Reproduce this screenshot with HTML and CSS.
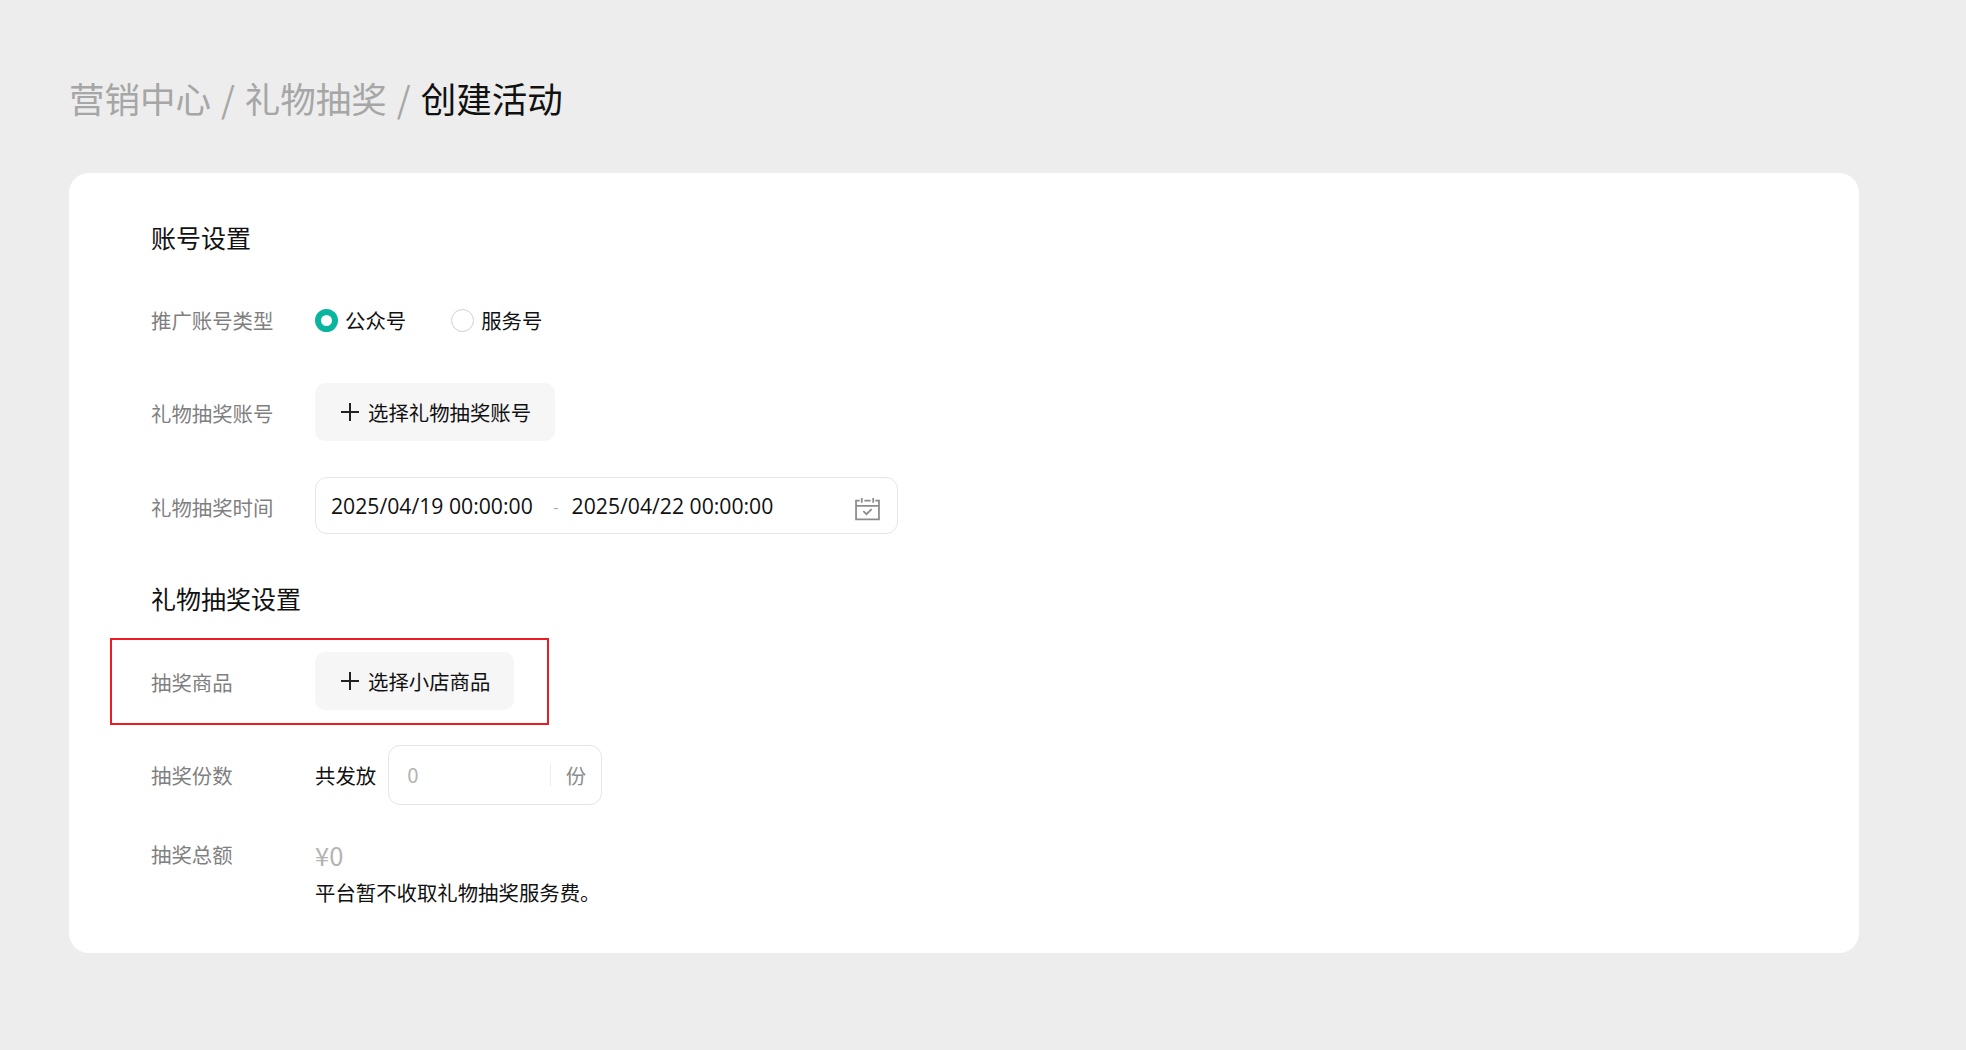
FILE: index.html
```html
<!DOCTYPE html>
<html lang="zh-CN">
<head>
    <meta charset="UTF-8">
    <title>创建活动</title>
    <link rel="stylesheet" href="styles.css">
</head>
<body>
    <h1 class="crumbs">
        <span class="crumb">营销中心 / 礼物抽奖 / </span>创建活动
    </h1>

    <div class="card">
        <h2 class="section first">账号设置</h2>

        <div class="row row-type">
            <div class="label">推广账号类型</div>
            <div class="radios">
                <label class="radio"><span class="dot checked"></span>公众号</label>
                <label class="radio"><span class="dot"></span>服务号</label>
            </div>
        </div>

        <div class="row row-account">
            <div class="label">礼物抽奖账号</div>
            <button class="add-btn">
                <svg class="plus" viewBox="0 0 18 18"><path d="M9 0v18M0 9h18"/></svg>
                选择礼物抽奖账号
            </button>
        </div>

        <div class="row row-time">
            <div class="label">礼物抽奖时间</div>
            <div class="date-range">
                <span class="date">2025/04/19 00:00:00</span>
                <span class="sep">-</span>
                <span class="date">2025/04/22 00:00:00</span>
                <svg class="cal" viewBox="0 0 24 24">
                    <path d="M4.500 4.500h-3.500v18h22v-18h-3.500 M1 9.500h22 M6.500 2v4.500 M17.500 2v4.500 M9 4.500h6"/>
                    <path d="M8 14.500l3 3 5-5"/>
                </svg>
            </div>
        </div>

        <h2 class="section">礼物抽奖设置</h2>

        <div class="row row-goods">
            <div class="label">抽奖商品</div>
            <button class="add-btn">
                <svg class="plus" viewBox="0 0 18 18"><path d="M9 0v18M0 9h18"/></svg>
                选择小店商品
            </button>
        </div>

        <div class="row row-count">
            <div class="label">抽奖份数</div>
            <span class="prefix">共发放</span>
            <div class="count-input">
                <span class="placeholder">0</span>
                <span class="unit">份</span>
            </div>
        </div>

        <div class="row row-total">
            <div class="label">抽奖总额</div>
            <div class="total">
                <div class="amount">¥0</div>
                <div class="note">平台暂不收取礼物抽奖服务费。</div>
            </div>
        </div>
    </div>
</body>
</html>
```

FILE: styles.css
```css
* {
    box-sizing: border-box;
}

body {
    margin: 0;
    min-height: 1050px;
    padding: 73px 107px 0 69px;
    background-color: #ededed;
    color: #111;
    font-family: "Noto Sans CJK SC", sans-serif;
    font-size: 20.400px;
}

.crumbs {
    margin: 0 0 51px;
    font-size: 35.500px;
    font-weight: 400;
    line-height: 49px;
    word-spacing: 2px;
}

.crumb {
    color: #a6a6a6;
}

.card {
    height: 780px;
    padding: 45px 82px 0;
    background-color: #fff;
    border-radius: 20px;
}

.section {
    margin: 0;
    font-size: 25px;
    font-weight: 400;
    line-height: 38px;
}

.row {
    display: flex;
    align-items: center;
}

.label {
    flex: 0 0 164px;
    margin-top: 2px;
    color: #7f7f7f;
    line-height: 30px;
}

.row-type .label,
.row-count .label {
    margin-top: 0;
}

.row-type {
    margin-top: 49px;
    height: 30px;
}

.radios {
    display: flex;
    gap: 45px;
}

.radio {
    display: flex;
    align-items: center;
    gap: 7px;
}

.dot {
    width: 23px;
    height: 23px;
    border: 1px solid #cfcfd4;
    border-radius: 50%;
}

.dot.checked {
    border: 6px solid #0ab5a0;
}

.row-account {
    margin-top: 48px;
}

.add-btn {
    display: flex;
    align-items: center;
    gap: 9px;
    height: 58px;
    padding: 0 24px 0 26px;
    border: none;
    border-radius: 10px;
    background-color: #f6f6f6;
    color: #111;
    font-family: inherit;
    font-size: 20.400px;
}

.plus {
    width: 18px;
    height: 18px;
}

.plus path {
    fill: none;
    stroke: #222;
    stroke-width: 2;
}

.row-time {
    margin-top: 36px;
}

.date-range {
    display: flex;
    align-items: center;
    width: 583px;
    height: 57px;
    padding: 0 17px 0 15px;
    border: 1px solid #e5e5e5;
    border-radius: 12px;
}

.date {
    width: 200px;
    font-family: "Open Sans", sans-serif;
    font-size: 21.200px;
    white-space: nowrap;
}

.sep {
    margin: 0 13px 0 22px;
    color: #aaa;
    font-size: 16px;
}

.cal {
    width: 25px;
    height: 25px;
    margin: 5px 0 0 auto;
}

.cal path {
    fill: none;
    stroke: #8c8c8c;
    stroke-width: 1.700;
}

.section + .row-goods {
    margin-top: 35px;
}

.row-goods {
    position: relative;
}

/* red annotation around the row */
.row-goods::before {
    content: "";
    position: absolute;
    top: -14px;
    left: -41px;
    width: 439px;
    height: 87px;
    box-sizing: border-box;
    border: 2px solid #ed1c24;
}

.row-time + .section {
    margin-top: 45px;
}

.row-count {
    margin-top: 35px;
}

.prefix {
    margin-right: 12px;
}

.count-input {
    display: flex;
    align-items: center;
    width: 214px;
    height: 60px;
    padding: 0 15px 0 18px;
    border: 1px solid #e5e5e5;
    border-radius: 12px;
}

.placeholder {
    flex: 1;
    padding-bottom: 2px;
    color: #b3b3b3;
}

.unit {
    padding-left: 15px;
    border-left: 1px solid #eee;
    color: #8c8c8c;
    line-height: 22px;
}

.row-total {
    align-items: flex-start;
    margin-top: 33px;
}

.row-total .label {
    margin-top: 1px;
}

.amount {
    color: #b3b3b3;
    font-size: 25.500px;
    line-height: 34px;
}

.note {
    margin-top: 5px;
    line-height: 30px;
}
```
